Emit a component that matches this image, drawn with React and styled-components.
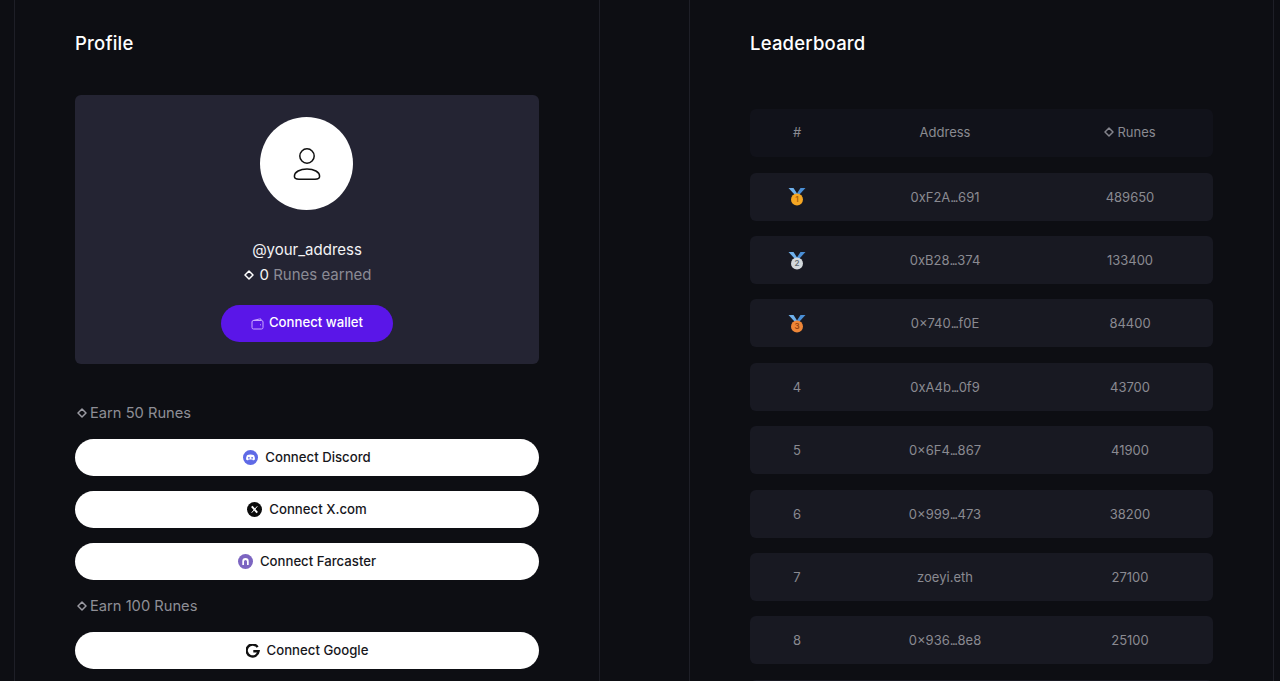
import React from 'react'
import styled, { createGlobalStyle } from 'styled-components'

const GlobalStyle = createGlobalStyle`
    html, body {
        margin: 0;
        height: 100%;
        overflow: hidden;
        background: #0d0e13;
    }
    * {
        box-sizing: border-box;
    }
`

const Page = styled.div`
    height: 681px;
    overflow: hidden;
    padding-left: 14px;
    display: flex;
    gap: 89px;
    font-family: Inter, 'Liberation Sans', sans-serif;
`
const Panel = styled.section`
    width: ${(p) => p.$width}px;
    height: 900px;
    flex-shrink: 0;
    padding: 32px 60px 0;
    border-left: 1px solid #1e1f27;
    border-right: 1px solid #1e1f27;
`
const Title = styled.h2`
    margin: 0;
    height: 22px;
    color: #fff;
    font-size: 18.5px;
    line-height: 22px;
    font-weight: 500;
    letter-spacing: 0.2px;
`
const ProfileCard = styled.div`
    margin-top: 41px;
    height: 269px;
    padding-top: 22px;
    background: #242433;
    border-radius: 6px;
    display: flex;
    flex-direction: column;
    align-items: center;
`
const Avatar = styled.div`
    width: 93px;
    height: 93px;
    margin-right: 1px;
    border-radius: 50%;
    background: #fff;
    display: flex;
    align-items: center;
    justify-content: center;
`
const Handle = styled.div`
    margin-top: 31px;
    color: #f4f4f6;
    font-size: 15px;
    line-height: 18px;
`
const Earned = styled.div`
    margin-top: 7px;
    display: flex;
    align-items: center;
    gap: 6px;
    color: #8b8b95;
    font-size: 15px;
    line-height: 18px;
    svg {
        margin-left: 1px;
    }
    strong {
        color: #f4f4f6;
        font-weight: 400;
    }
`
const WalletButton = styled.button`
    margin-top: 21px;
    width: 172px;
    height: 37px;
    padding: 0 0 3px;
    border: none;
    border-radius: 19px;
    background: #5a16e8;
    color: #fff;
    font-family: inherit;
    font-size: 13.2px;
    font-weight: 500;
    display: flex;
    align-items: center;
    justify-content: center;
    gap: 5px;
    svg {
        margin-top: 3px;
    }
`
const EarnLabel = styled.div`
    margin-top: ${(p) => p.$top}px;
    height: 18px;
    padding-left: 2px;
    display: flex;
    align-items: center;
    gap: 3px;
    color: #8e8e96;
    font-size: 14.7px;
    line-height: 18px;
`
const ConnectList = styled.div`
    margin-top: 17px;
    display: flex;
    flex-direction: column;
    gap: 15px;
`
const ConnectButton = styled.button`
    width: 100%;
    height: 37px;
    padding: 0 0 2px;
    border: none;
    border-radius: 19px;
    background: #fff;
    color: #17171c;
    font-family: inherit;
    font-size: 13.2px;
    font-weight: 500;
    display: flex;
    align-items: center;
    justify-content: center;
    gap: 7px;
    svg {
        margin-top: 2px;
    }
`
const Table = styled.div`
    margin-top: 55.3px;
    display: flex;
    flex-direction: column;
    gap: 15.4px;
`
const Row = styled.div`
    height: 48px;
    padding-bottom: ${(p) => (p.$head ? 2 : 0)}px;
    display: grid;
    grid-template-columns: 94px 202px 168px;
    align-items: center;
    justify-items: center;
    border-radius: 6px;
    background: ${(p) => (p.$head ? '#11121a' : '#181922')};
    color: #8a8a91;
    font-size: 13px;
`
const RunesHead = styled.span`
    display: flex;
    align-items: center;
    gap: 3px;
`
const Dots = styled.span`
    letter-spacing: -1.5px;
    margin-right: 1px;
`

const Diamond = ({ size = 10, color = '#fff' }) => (
    <svg width={size} height={size} viewBox='0 0 10 10' fill='none'>
        <path d='M5 1 9 5 5 9 1 5Z' stroke={color} strokeWidth='1.5' strokeLinejoin='round' />
    </svg>
)

const UserIcon = () => (
    <svg width='32' height='34' viewBox='0 0 32 34' fill='none' stroke='#111' strokeWidth='1.5'>
        <circle cx='16' cy='9' r='7.2' />
        <path d='M8 32.2h16c3 0 4.6-1.4 4.6-3 0-4.2-5.6-7.2-12.6-7.2S3.400 25 3.400 29.200c0 1.600 1.600 3 4.600 3Z' />
    </svg>
)

const WalletIcon = () => (
    <svg width='13' height='12' viewBox='0 0 13 12' fill='none' stroke='#c9a8ff' strokeWidth='1'>
        <rect x='1' y='2.500' width='11' height='8.500' rx='1.500' />
        <path d='M2 2.500 8.500 1H10v1.500M9 6.800h1' />
    </svg>
)

const DiscordIcon = () => (
    <svg width='15' height='15' viewBox='0 0 15 15'>
        <circle cx='7.500' cy='7.500' r='7.500' fill='#5f6ae6' />
        <path d='M4 5.200c2-1 5-1 7 0 .7 1.400 1 2.800 1 4.300-.7.500-1.400.8-2 1l-.6-.9H5.600l-.6.900c-.6-.2-1.300-.5-2-1 0-1.500.3-2.900 1-4.300Z' fill='#fff' />
        <circle cx='5.900' cy='7.800' r='.9' fill='#5f6ae6' />
        <circle cx='9.100' cy='7.800' r='.9' fill='#5f6ae6' />
    </svg>
)

const XIcon = () => (
    <svg width='15' height='15' viewBox='0 0 15 15'>
        <circle cx='7.500' cy='7.500' r='7.500' fill='#0c0c0c' />
        <path d='M4.800 4.300 10.200 10.700' stroke='#fff' strokeWidth='1.900' />
        <path d='M10.300 4.300 4.700 10.700' stroke='#fff' strokeWidth='1' />
    </svg>
)

const FarcasterIcon = () => (
    <svg width='15' height='15' viewBox='0 0 15 15'>
        <circle cx='7.500' cy='7.500' r='7.500' fill='#7c65c1' />
        <path d='M4.300 11V7.200a3.200 3.200 0 0 1 6.400 0V11H9V7.400a1.500 1.500 0 0 0-3 0V11Z' fill='#fff' />
    </svg>
)

const GoogleIcon = () => (
    <svg width='14' height='14' viewBox='0 0 14 14' fill='none'>
        <path d='M11.600 3.100A6 6 0 1 0 12.600 7.200H7.300' stroke='#111' strokeWidth='2.400' />
    </svg>
)

const medalColors = {
    1: ['#f5a623', '#a8620a'],
    2: ['#d3d8dc', '#5f6a72'],
    3: ['#ee8638', '#94430d'],
}

const Medal = ({ place }) => (
    <svg width='18' height='19' viewBox='0 0 18 19'>
        <path d='M.5 1h5L10 8H7Z' fill='#6fb1ec' />
        <path d='M17.500 1h-5L8 8h3Z' fill='#4a8fd6' />
        <circle cx='9' cy='12.500' r='6' fill={medalColors[place][0]} />
        <text
            x='9'
            y='15.300'
            textAnchor='middle'
            fontSize='8'
            fontWeight='600'
            fill={medalColors[place][1]}
        >
            {place}
        </text>
    </svg>
)

const socials50 = [
    { label: 'Connect Discord', icon: <DiscordIcon /> },
    { label: 'Connect X.com', icon: <XIcon /> },
    { label: 'Connect Farcaster', icon: <FarcasterIcon /> },
]

const leaders = [
    { rank: 1, address: '0xF2A...691', runes: 489650 },
    { rank: 2, address: '0xB28...374', runes: 133400 },
    { rank: 3, address: '0×740...f0E', runes: 84400 },
    { rank: 4, address: '0xA4b...0f9', runes: 43700 },
    { rank: 5, address: '0×6F4...867', runes: 41900 },
    { rank: 6, address: '0×999...473', runes: 38200 },
    { rank: 7, address: 'zoeyi.eth', runes: 27100 },
    { rank: 8, address: '0×936...8e8', runes: 25100 },
]

const Address = ({ value }) => {
    const parts = value.split('...')
    if (parts.length < 2) return <span>{value}</span>
    return (
        <span>
            {parts[0]}
            <Dots>...</Dots>
            {parts[1]}
        </span>
    )
}

const App = () => {
    return (
        <Page>
            <GlobalStyle />
            <Panel $width={586}>
                <Title>Profile</Title>
                <ProfileCard>
                    <Avatar>
                        <UserIcon />
                    </Avatar>
                    <Handle>@your_address</Handle>
                    <Earned>
                        <Diamond />
                        <span><strong>0</strong> Runes earned</span>
                    </Earned>
                    <WalletButton>
                        <WalletIcon />
                        Connect wallet
                    </WalletButton>
                </ProfileCard>
                <EarnLabel $top={40}>
                    <Diamond color='#9a9aa2' />
                    Earn 50 Runes
                </EarnLabel>
                <ConnectList>
                    {socials50.map((s) => (
                        <ConnectButton key={s.label}>
                            {s.icon}
                            {s.label}
                        </ConnectButton>
                    ))}
                </ConnectList>
                <EarnLabel $top={17}>
                    <Diamond color='#9a9aa2' />
                    Earn 100 Runes
                </EarnLabel>
                <ConnectList>
                    <ConnectButton>
                        <GoogleIcon />
                        Connect Google
                    </ConnectButton>
                </ConnectList>
            </Panel>
            <Panel $width={585}>
                <Title>Leaderboard</Title>
                <Table>
                    <Row $head>
                        <span>#</span>
                        <span>Address</span>
                        <RunesHead>
                            <Diamond color='#84848c' />
                            Runes
                        </RunesHead>
                    </Row>
                    {leaders.map((l) => (
                        <Row key={l.rank}>
                            {l.rank <= 3 ? <Medal place={l.rank} /> : <span>{l.rank}</span>}
                            <Address value={l.address} />
                            <span>{l.runes}</span>
                        </Row>
                    ))}
                    {/* next row only peeks in at the bottom edge */}
                    <Row />
                </Table>
            </Panel>
        </Page>
    )
}

export default App
